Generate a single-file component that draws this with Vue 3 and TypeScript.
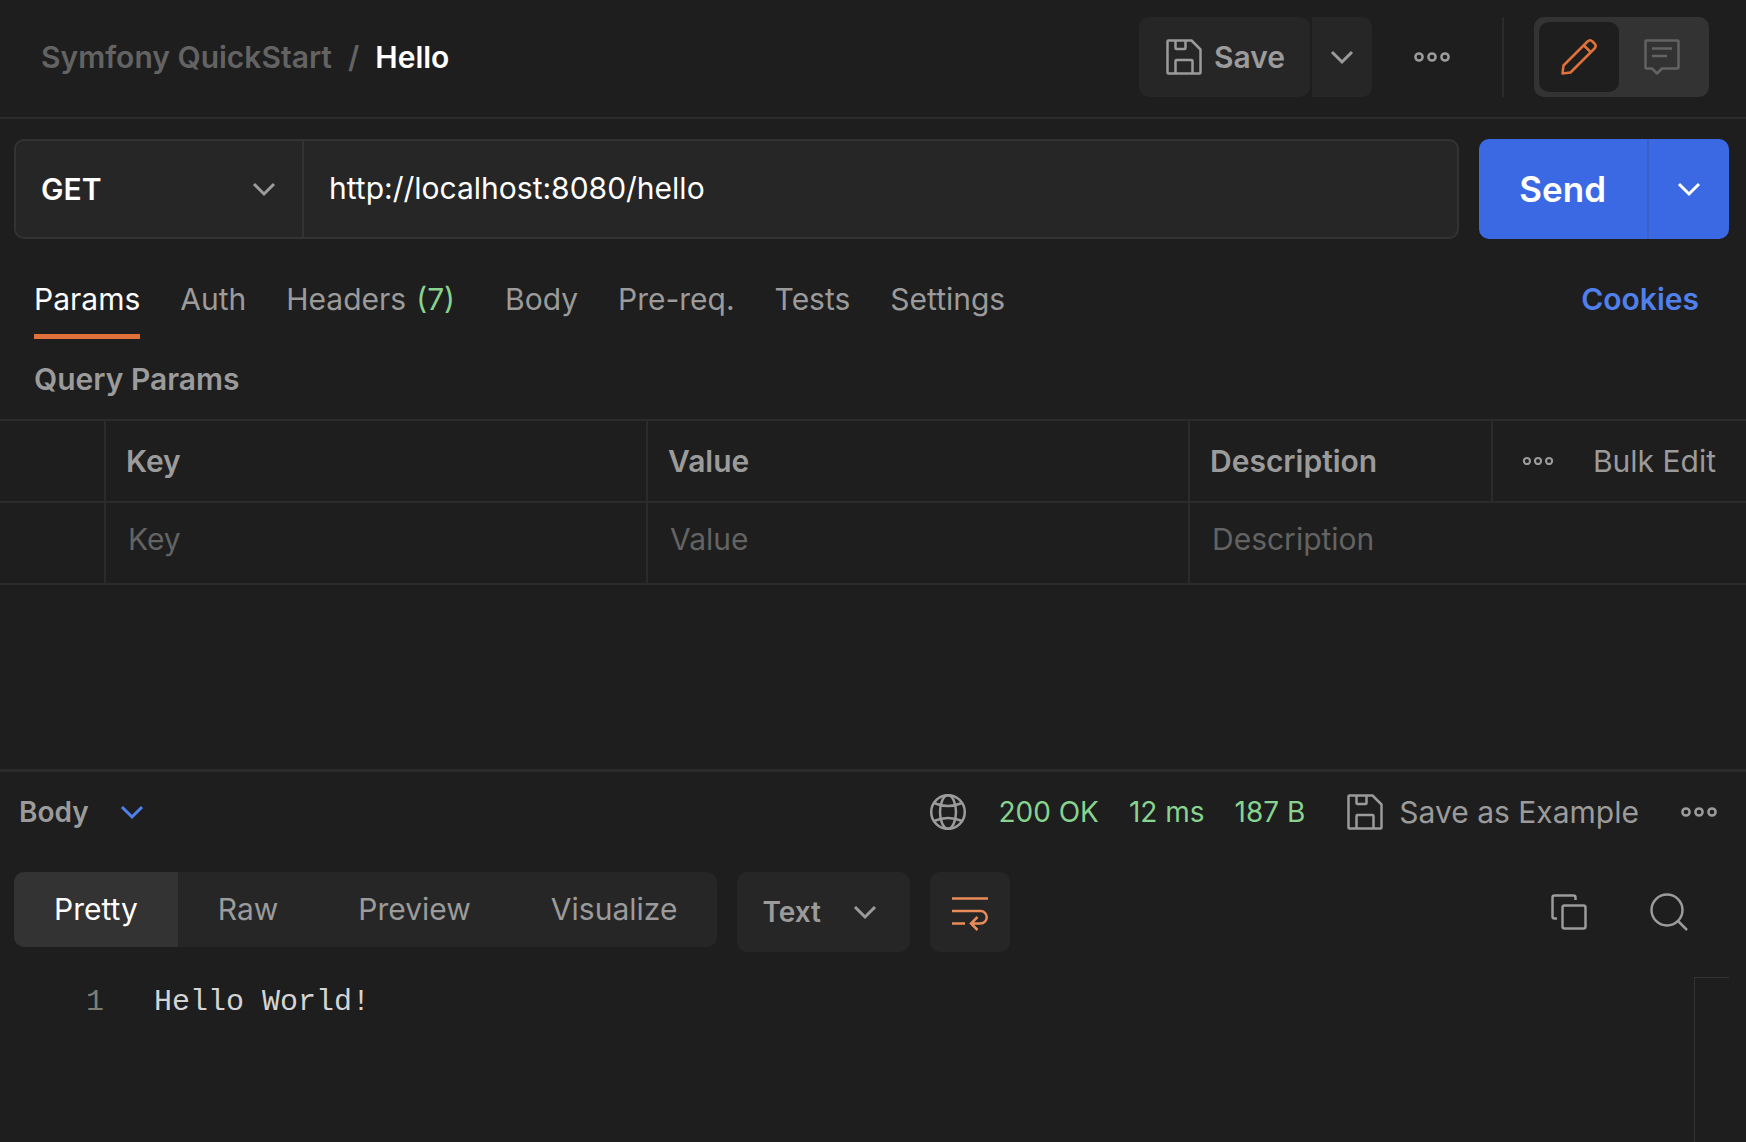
<script setup lang="ts">
import { ref } from 'vue'

interface Tab {
  name: string
  count?: number
}

const tabs: Tab[] = [
  { name: 'Params' },
  { name: 'Auth' },
  { name: 'Headers', count: 7 },
  { name: 'Body' },
  { name: 'Pre-req.' },
  { name: 'Tests' },
  { name: 'Settings' },
]
const views: string[] = ['Pretty', 'Raw', 'Preview', 'Visualize']
const stats: string[] = ['200 OK', '12 ms', '187 B']
const fields: string[] = ['Key', 'Value', 'Description']

const activeTab = ref('Params')
const activeView = ref('Pretty')
const method = ref('GET')
const url = ref('http://localhost:8080/hello')
const section = ref('Body')
const format = ref('Text')
const lines: string[] = ['Hello World!']
</script>

<template>
  <div class="app">
    <svg class="defs" aria-hidden="true">
      <symbol id="i-chevron" viewBox="0 0 40 40">
        <path d="M10 15l10 10 10-10" fill="none" stroke="currentColor" stroke-width="3" />
      </symbol>
      <symbol id="i-save" viewBox="0 0 40 40">
        <g fill="none" stroke="currentColor" stroke-width="2.5" stroke-linejoin="round">
          <path d="M4.500 3.500h23l9 9v23q0 1-1 1h-31q-1 0-1-1v-31q0-1 1-1z" />
          <path d="M11.500 4v7q0 1 1 1h8q1 0 1-1v-7" />
          <path d="M11.500 36v-12q0-1 1-1h15q1 0 1 1v12" />
        </g>
      </symbol>
      <symbol id="i-dots" viewBox="0 0 40 40">
        <g fill="none" stroke="currentColor" stroke-width="2.5">
          <circle cx="7" cy="20" r="3.600" />
          <circle cx="20" cy="20" r="3.600" />
          <circle cx="33" cy="20" r="3.600" />
        </g>
      </symbol>
    </svg>

    <header class="top">
      <nav class="crumbs" aria-label="Breadcrumb">
        <a href="#collection">Symfony QuickStart</a>
        <span>/</span>
        <strong>Hello</strong>
      </nav>
      <div class="save-group">
        <button class="save" type="button">
          <svg class="icon"><use href="#i-save" /></svg>
          Save
        </button>
        <button class="save-more" type="button" aria-label="Save options">
          <svg class="icon"><use href="#i-chevron" /></svg>
        </button>
      </div>
      <button class="plain top-dots" type="button" aria-label="More actions">
        <svg class="icon"><use href="#i-dots" /></svg>
      </button>
      <div class="rule"></div>
      <div class="mode">
        <button class="mode-btn on" type="button" aria-label="Edit">
          <svg class="icon" viewBox="0 0 40 40" fill="none" stroke="currentColor" stroke-width="2.500" stroke-linejoin="round">
            <path d="M3.500 36.500L4.500 28.500 28.500 4.500q2.500-2.500 5 0l2 2q2.500 2.500 0 5L11.500 35.500z" />
            <path d="M25 8.500l6.500 6.500" />
          </svg>
        </button>
        <button class="mode-btn" type="button" aria-label="Comments">
          <svg class="icon" viewBox="0 0 40 40" fill="none" stroke="currentColor" stroke-width="2.500" stroke-linejoin="round">
            <path d="M4.500 3.500h31q1 0 1 1v26q0 1-1 1H20l-5 5-5-5H4.500q-1 0-1-1v-26q0-1 1-1z" />
            <path d="M10 11.500h20M10 19h15" />
          </svg>
        </button>
      </div>
    </header>

    <form class="request" @submit.prevent>
      <div class="address">
        <div class="method">
          <select v-model="method" aria-label="Method">
            <option>GET</option>
            <option>POST</option>
          </select>
          <svg class="icon"><use href="#i-chevron" /></svg>
        </div>
        <input v-model="url" type="text" aria-label="Request URL" />
      </div>
      <div class="send-group">
        <button class="send" type="submit">Send</button>
        <button class="send-more" type="button" aria-label="Send options">
          <svg class="icon"><use href="#i-chevron" /></svg>
        </button>
      </div>
    </form>

    <nav class="tabs" aria-label="Request">
      <button
        v-for="tab in tabs"
        :key="tab.name"
        type="button"
        class="tab"
        :class="{ on: tab.name === activeTab, counted: tab.count }"
        @click="activeTab = tab.name"
      >
        {{ tab.name }}<span v-if="tab.count" class="count">({{ tab.count }})</span>
      </button>
      <a class="cookies" href="#cookies">Cookies</a>
    </nav>

    <h2>Query Params</h2>
    <table>
      <colgroup>
        <col class="c-check" />
        <col />
        <col />
        <col class="c-desc" />
        <col class="c-bulk" />
      </colgroup>
      <thead>
        <tr>
          <td></td>
          <th v-for="field in fields" :key="field" scope="col">{{ field }}</th>
          <td class="bulk">
            <div class="bulk-row">
              <button class="plain" type="button" aria-label="Column options">
                <svg class="icon small"><use href="#i-dots" /></svg>
              </button>
              <button class="plain" type="button">Bulk Edit</button>
            </div>
          </td>
        </tr>
      </thead>
      <tbody>
        <tr>
          <td></td>
          <td v-for="field in fields" :key="field" :colspan="field === 'Description' ? 2 : 1">
            <input type="text" :placeholder="field" :aria-label="field" />
          </td>
        </tr>
      </tbody>
    </table>

    <section class="response">
      <div class="status">
        <div class="section-pick">
          <select v-model="section" aria-label="Response section">
            <option>Body</option>
            <option>Headers</option>
          </select>
          <svg class="icon"><use href="#i-chevron" /></svg>
        </div>
        <svg class="icon globe" viewBox="0 0 40 40" fill="none" stroke="currentColor" stroke-width="2.500">
          <circle cx="20" cy="20" r="16.800" />
          <ellipse cx="20" cy="20" rx="8" ry="16.800" />
          <path d="M6 11q14 6 28 0M6 29q14-6 28 0" />
        </svg>
        <div class="stats">
          <span v-for="stat in stats" :key="stat">{{ stat }}</span>
        </div>
        <button class="plain example" type="button">
          <svg class="icon"><use href="#i-save" /></svg>
          Save as Example
        </button>
        <button class="plain" type="button" aria-label="Response actions">
          <svg class="icon"><use href="#i-dots" /></svg>
        </button>
      </div>

      <div class="tools">
        <div class="views">
          <button
            v-for="view in views"
            :key="view"
            type="button"
            :class="{ on: view === activeView }"
            @click="activeView = view"
          >
            {{ view }}
          </button>
        </div>
        <div class="format">
          <select v-model="format" aria-label="Format">
            <option>Text</option>
            <option>JSON</option>
          </select>
          <svg class="icon"><use href="#i-chevron" /></svg>
        </div>
        <button class="wrap" type="button" aria-label="Wrap lines">
          <svg class="icon" viewBox="0 0 40 40" fill="none" stroke="currentColor" stroke-width="2.500">
            <path d="M2 6.500h36M2 19h28.500a6.200 6.200 0 0 1 0 12.500H21M2 31.500h13M27.500 25l-6.500 6.500 6.500 6.500" />
          </svg>
        </button>
        <div class="right-tools">
          <button class="plain" type="button" aria-label="Copy">
            <svg class="icon" viewBox="0 0 40 40" fill="none" stroke="currentColor" stroke-width="2.500" stroke-linejoin="round">
              <rect x="13.500" y="13.500" width="23" height="23" rx="2" />
              <path d="M8 26.500H5.500q-2 0-2-2v-19q0-2 2-2h19q2 0 2 2V8" />
            </svg>
          </button>
          <button class="plain" type="button" aria-label="Search">
            <svg class="icon" viewBox="0 0 40 40" fill="none" stroke="currentColor" stroke-width="2.500">
              <circle cx="18" cy="18" r="15.500" />
              <path d="M29 29l9 9" />
            </svg>
          </button>
        </div>
      </div>

      <div class="editor">
        <ol>
          <li v-for="(line, i) in lines" :key="i">
            <span class="num">{{ i + 1 }}</span><code>{{ line }}</code>
          </li>
        </ol>
        <div class="minimap"></div>
      </div>
    </section>
  </div>
</template>

<style>
body {
  margin: 0;
  background: #1e1e1e;
}
</style>

<style scoped>
.app {
  display: flex;
  flex-direction: column;
  min-height: 100vh;
  box-sizing: border-box;
  background: #1e1e1e;
  color: #9b9b9b;
  font: 400 30px/40px Inter, sans-serif;
}
.defs {
  position: absolute;
  width: 0;
  height: 0;
}
.icon {
  display: block;
  flex: none;
  width: 40px;
  height: 40px;
}
.icon.small {
  width: 34px;
  height: 34px;
}
button,
select,
input {
  margin: 0;
  padding: 0;
  border: 0;
  background: none;
  color: inherit;
  font: inherit;
  appearance: none;
  outline: none;
}
a {
  color: inherit;
  text-decoration: none;
}
.top {
  display: flex;
  align-items: center;
  padding: 17px 37px 20px 41px;
  border-bottom: 2px solid #2b2b2b;
}
.crumbs {
  display: flex;
  gap: 16px;
  margin-right: auto;
  color: #636363;
  font-weight: 600;
}
.crumbs strong {
  color: #fff;
  font-weight: 600;
}
.save-group {
  display: flex;
  gap: 2px;
  font-weight: 600;
}
.save,
.save-more {
  display: flex;
  align-items: center;
  height: 80px;
  background: #262626;
}
.save {
  gap: 10px;
  padding: 0 25px;
  border-radius: 10px;
}
.save-more {
  padding: 0 10px;
  border-radius: 0 10px 10px 0;
}
.top-dots {
  margin: 0 50px 0 40px;
}
.rule {
  width: 2px;
  height: 80px;
  margin-right: 30px;
  background: #2b2b2b;
}
.mode {
  display: flex;
  gap: 3px;
  padding: 5px 7px 5px 5px;
  border-radius: 10px;
  background: #333;
}
.mode-btn {
  padding: 15px 20px;
  border-radius: 10px;
  color: #636363;
}
.mode-btn.on {
  background: #1e1e1e;
  color: #e0713a;
}
.request {
  display: flex;
  gap: 20px;
  padding: 20px 17px 20px 14px;
}
.address {
  display: flex;
  flex: 1;
  height: 96px;
  border: 2px solid #333;
  border-radius: 10px;
  background: #262626;
  color: #fff;
}
.method {
  position: relative;
  width: 286px;
  border-right: 2px solid #333;
}
.method select {
  width: 100%;
  height: 100%;
  padding-left: 25px;
  font-weight: 600;
}
.method .icon,
.format .icon {
  position: absolute;
  top: 50%;
  right: 18px;
  margin-top: -20px;
  color: #9b9b9b;
  pointer-events: none;
}
.address input {
  flex: 1;
  min-width: 0;
  padding: 0 25px 2px;
}
.send-group {
  display: flex;
  color: #fff;
}
.send,
.send-more {
  background: #3b69e3;
}
.send {
  padding: 0 41px 0 40px;
  border-right: 2px solid #3960cb;
  border-radius: 10px 0 0 10px;
  font-size: 35px;
  font-weight: 600;
}
.send-more {
  padding: 0 20px;
  border-radius: 0 10px 10px 0;
}
.tabs {
  display: flex;
  gap: 40px;
  padding: 20px 47px 0 34px;
}
.tab {
  height: 60px;
  padding-bottom: 15px;
  border-bottom: 5px solid transparent;
}
.tab.on {
  border-color: #e0713a;
  color: #fff;
}
.tab.counted {
  margin-right: 10px;
}
.count {
  margin-left: 10px;
  color: #87d38f;
}
.cookies {
  margin-left: auto;
  color: #5080ec;
  font-weight: 600;
}
h2 {
  margin: 20px 34px;
  font-size: 30px;
  font-weight: 600;
}
table {
  width: 100%;
  border-collapse: collapse;
  table-layout: fixed;
}
tr {
  height: 82px;
  border-top: 2px solid #2b2b2b;
  border-bottom: 2px solid #2b2b2b;
}
td,
th {
  box-sizing: border-box;
  padding: 0 20px;
  text-align: left;
  font-weight: 600;
}
td + td,
th,
.bulk {
  border-left: 2px solid #2b2b2b;
}
.bulk {
  font-weight: 400;
}
.c-check {
  width: 105px;
}
.c-desc {
  width: 303px;
}
.c-bulk {
  width: 254px;
}
.bulk-row {
  display: flex;
  justify-content: space-between;
  align-items: center;
  padding: 0 10px 0 8px;
}
tbody td {
  padding: 0 22px 8px;
  font-weight: 400;
}
tbody input {
  display: block;
  width: 100%;
}
input::placeholder {
  color: #636363;
  opacity: 1;
}
.response {
  display: flex;
  flex: 1;
  flex-direction: column;
  margin-top: 184px;
  border-top: 3px solid #2b2b2b;
}
.status {
  display: flex;
  align-items: center;
  padding: 20px 27px 20px 19px;
}
.section-pick {
  position: relative;
  display: flex;
  width: 133px;
  margin-right: auto;
  font-size: 28px;
  font-weight: 600;
}
.section-pick select {
  flex: 1;
}
.section-pick .icon {
  position: absolute;
  top: 0;
  right: 0;
  color: #5080ec;
  pointer-events: none;
}
.stats {
  display: flex;
  gap: 30px;
  margin: 0 40px 0 30px;
  color: #87d38f;
  font-size: 28px;
}
.example {
  display: flex;
  align-items: center;
  gap: 14px;
  margin-right: 40px;
}
.tools {
  display: flex;
  align-items: flex-start;
  gap: 20px;
  padding: 20px 57px 25px 14px;
}
.views {
  display: flex;
  overflow: hidden;
  border-radius: 10px;
  background: #262626;
}
.views button {
  height: 75px;
  padding: 0 40px 2px;
}
.views .on {
  background: #333;
  color: #fff;
}
.format {
  position: relative;
  width: 173px;
  height: 80px;
  border-radius: 10px;
  background: #262626;
  font-size: 28px;
  font-weight: 600;
}
.format select {
  width: 100%;
  height: 100%;
  padding-left: 25px;
}
.format .icon {
  right: 25px;
}
.wrap {
  padding: 20px;
  border-radius: 10px;
  background: #262626;
  color: #e88c5a;
}
.right-tools {
  display: flex;
  gap: 60px;
  margin: 20px 0 0 auto;
}
.editor {
  display: flex;
  flex: 1;
  justify-content: space-between;
  padding-right: 17px;
}
ol {
  margin: 0;
  padding: 5px 0 0;
  list-style: none;
  font-family: "Liberation Mono", monospace;
}
li {
  display: flex;
}
.num {
  width: 104px;
  margin-right: 50px;
  color: #7d7d73;
  text-align: right;
}
code {
  color: #d4d4d4;
  font: inherit;
}
.minimap {
  width: 34px;
  border-top: 1px solid #333;
  border-left: 1px solid #333;
}
</style>
